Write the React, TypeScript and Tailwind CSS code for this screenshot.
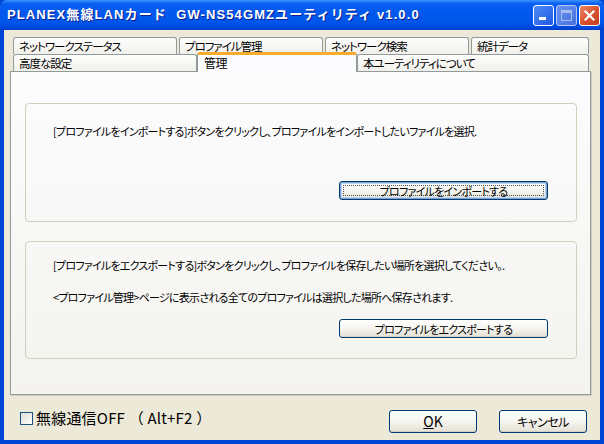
import React from "react";

const jp = "font-['MS_UI_Gothic','Noto_Sans_CJK_JP',sans-serif] [font-feature-settings:'palt']";
const txt = "text-[11px] tracking-[-0.75px] leading-[16px] text-black whitespace-nowrap";

function Tab({ label, w, selected = false }: { label: string; w: string; selected?: boolean }) {
  if (selected) {
    return (
      <div
        className={`${w} relative z-10 -mb-px -mt-[2px] h-[20px] rounded-t-[3px] border-x border-t-[3px] border-x-[#919b9c] border-t-[#f7ac2c] bg-[#fcfcfe] pl-[6px] text-[12px] tracking-[-0.6px] leading-[16px] text-black`}
      >
        {label}
      </div>
    );
  }
  return (
    <div
      className={`${w} h-[17px] shrink-0 rounded-t-[3px] border border-b-0 border-[#919b9c] bg-gradient-to-b from-[#fefefe] to-[#f1f0ea] pl-[5px] text-[11.5px] tracking-[-1px] leading-[16px] text-black`}
    >
      {label}
    </div>
  );
}

function XPButton({ label, w, h, focused = false, children }: { label?: string; w: string; h: string; focused?: boolean; children?: React.ReactNode }) {
  return (
    <div
      className={`${w} ${h} flex items-center justify-center rounded-[3px] border border-[#003c74] bg-gradient-to-b from-[#ffffff] via-[#f5f4ef] to-[#e3e0d4] text-black ${
        focused ? "shadow-[inset_0_0_0_1px_#7da2ce,inset_0_0_0_2px_#bcd4f6]" : "shadow-[inset_0_-1px_0_0_#d6d0c5]"
      }`}
    >
      {focused ? (
        <div className={`flex h-[calc(100%-6px)] w-[calc(100%-6px)] items-center justify-center border border-dotted border-[#555] ${txt}`}>
          {label}
        </div>
      ) : (
        children ?? <span className={txt}>{label}</span>
      )}
    </div>
  );
}

export default function App() {
  return (
    <div className={`flex h-[444px] w-[604px] flex-col bg-[#0046d5] ${jp}`}>
      {/* Title bar */}
      <div className="flex h-[30px] shrink-0 items-center rounded-t-[7px] bg-[linear-gradient(to_bottom,#3d95ff_0%,#0a5ff0_12%,#0058ee_45%,#0055ea_75%,#0048dc_92%,#003cc8_100%)] pl-[7px] pr-[4px]">
        <div className="flex-1 whitespace-pre font-['Liberation_Sans','Noto_Sans_CJK_JP',sans-serif] text-[13px] font-bold tracking-[1.1px] text-white [font-feature-settings:normal] [text-shadow:1px_1px_0_#0f1f8a]">
          PLANEX無線LANカード  GW-NS54GMZユーティリティ v1.0.0
        </div>
        <div className="flex gap-[2px]">
          <div className="flex h-[21px] w-[21px] items-end justify-start rounded-[3px] border border-white bg-gradient-to-br from-[#4f8af7] to-[#1f57e0] pb-[5px] pl-[5px]">
            <div className="h-[3px] w-[7px] bg-white" />
          </div>
          <div className="flex h-[21px] w-[21px] items-center justify-center rounded-[3px] border border-[#b8c8f4] bg-gradient-to-br from-[#6b93ee] to-[#4370e0]">
            <div className="h-[11px] w-[11px] border border-t-[3px] border-[#a9bcef]" />
          </div>
          <div className="flex h-[21px] w-[21px] items-center justify-center rounded-[3px] border border-white bg-gradient-to-br from-[#e98a6a] via-[#d9532f] to-[#c2401f]">
            <svg width="11" height="11" viewBox="0 0 11 11">
              <path d="M1.5 1.5 L9.5 9.5 M9.5 1.5 L1.5 9.5" stroke="white" strokeWidth="2.2" strokeLinecap="square" />
            </svg>
          </div>
        </div>
      </div>

      {/* Body */}
      <div className="mx-[4px] mb-[4px] flex flex-1 flex-col bg-[#ece9d8] px-[6px] pt-[7px]">
        {/* Tab row 1 */}
        <div className="flex gap-[2px] pl-[3px]">
          <Tab label="ネットワークステータス" w="w-[164px]" />
          <Tab label="プロファイル管理" w="w-[144px]" />
          <Tab label="ネットワーク検索" w="w-[144px]" />
          <Tab label="統計データ" w="w-[118px]" />
        </div>
        {/* Tab row 2 */}
        <div className="flex items-end pl-[3px]">
          <Tab label="高度な設定" w="w-[184px]" />
          <Tab label="管理" w="w-[160px] shrink-0" selected />
          <Tab label="本ユーティリティについて" w="w-[232px]" />
        </div>
        {/* Panel */}
        <div className="flex h-[324px] w-[581px] shrink-0 flex-col gap-[19px] border border-[#919b9c] bg-gradient-to-b from-[#fcfcfe] to-[#f4f3ee] pl-[14px] pt-[31px] shadow-[1px_1px_0_#d0cec1]">
          {/* Group 1 */}
          <div className="h-[119px] w-[552px] shrink-0 rounded-[4px] border border-[#d0d0bf] pl-[27px] pt-[19px]">
            <div className={txt}>
              [プロファイルをインポートする]ボタンをクリックし、プロファイルをインポートしたいファイルを選択.
            </div>
            <div className="mt-[42px] pl-[286px]">
              <XPButton label="プロファイルをインポートする" w="w-[209px]" h="h-[19px]" focused />
            </div>
          </div>
          {/* Group 2 */}
          <div className="h-[118px] w-[552px] shrink-0 rounded-[4px] border border-[#d0d0bf] pl-[27px] pt-[15px]">
            <div className={txt}>
              [プロファイルをエクスポートする]ボタンをクリックし、プロファイルを保存したい場所を選択してください。.
            </div>
            <div className={`mt-[16px] ${txt}`}>
              &lt;プロファイル管理&gt;ページに表示される全てのプロファイルは選択した場所へ保存されます.
            </div>
            <div className="mt-[14px] pl-[286px]">
              <XPButton label="プロファイルをエクスポートする" w="w-[209px]" h="h-[19px]" />
            </div>
          </div>
        </div>
        {/* Bottom */}
        <div className="flex flex-1 items-start">
          <div className="ml-[10px] mt-[14px] flex items-center">
            <div className="h-[13px] w-[13px] border border-[#1c5180] bg-gradient-to-br from-[#dcdcd7] to-[#ffffff]" />
            <span className="ml-[3px] whitespace-pre text-[15px] leading-[18px] tracking-[0.2px] text-black [font-feature-settings:normal]">無線通信OFF （ Alt+F2 ）</span>
          </div>
          <div className="ml-auto mt-[15px] flex gap-[22px] pr-[7px]">
            <XPButton w="w-[88px]" h="h-[23px]">
              <span className="text-[14px]">
                <span className="underline">O</span>K
              </span>
            </XPButton>
            <XPButton w="w-[88px]" h="h-[23px]">
              <span className="text-[12px] tracking-[-0.5px]">キャンセル</span>
            </XPButton>
          </div>
        </div>
      </div>
    </div>
  );
}
